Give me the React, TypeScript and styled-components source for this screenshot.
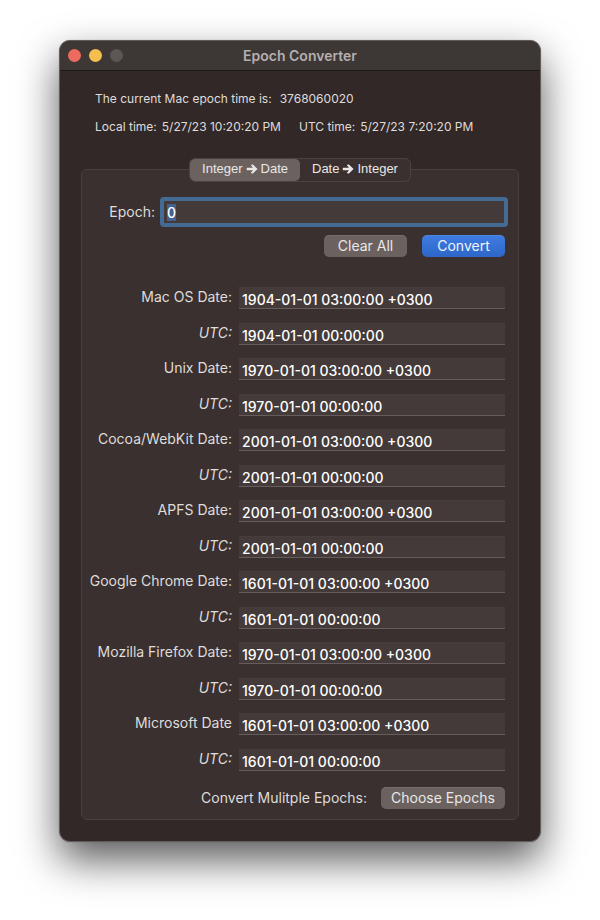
import React, { useEffect, useRef, useState } from "react";
import styled, { createGlobalStyle, css } from "styled-components";

const GlobalStyle = createGlobalStyle`
  *, *::before, *::after { box-sizing: border-box; }
  body {
    margin: 0;
    background: #fff;
    font-family: Inter, "Liberation Sans", sans-serif;
    font-size: 14px;
    color: #dfdcdb;
  }
  button, input { font: inherit; color: inherit; }
`;

const Desktop = styled.main`
  padding: 40px 59px 79px;
`;

const Window = styled.section`
  border: 1px solid #625b5a;
  border-radius: 11px;
  background: #322827;
  box-shadow: 0 0 1px rgba(0, 0, 0, 0.4), 0 18px 40px rgba(0, 0, 0, 0.65);
  overflow: hidden;
`;

const TitleBar = styled.header`
  display: grid;
  grid-template-columns: 1fr auto 1fr;
  align-items: center;
  height: 30px;
  padding: 0 8px;
  background: #3d3736;
  border-bottom: 1px solid #1f1918;
`;

const WindowControls = styled.div`
  display: flex;
  gap: 8px;
`;

const WindowControl = styled.button<{ $color: string }>`
  width: 13px;
  height: 13px;
  padding: 0;
  border: 0;
  border-radius: 50%;
  background: ${(p) => p.$color};
`;

const Title = styled.h1`
  margin: 0;
  font-size: 14px;
  line-height: 20px;
  font-weight: 600;
  color: #b4afae;
`;

const Summary = styled.div`
  display: grid;
  gap: 12px;
  padding: 20px 35px 34px;
  font-size: 12px;
  line-height: 16px;
`;

const SummaryRow = styled.div`
  display: flex;
  gap: 18px;
`;

const SummaryItem = styled.div<{ $wide?: boolean }>`
  display: flex;
  gap: ${(p) => (p.$wide ? 8 : 5)}px;
`;

const TabList = styled.div`
  display: flex;
  width: fit-content;
  height: 24px;
  margin: -12px auto 0;
  border: 1px solid #4b4342;
  border-radius: 6px;
  background: #3a302f;
`;

const Tab = styled.button`
  display: flex;
  align-items: center;
  gap: 3px;
  height: 22px;
  padding: 0 12px 2px;
  border: 0;
  border-radius: 5px;
  background: transparent;
  font-family: "Liberation Sans", Arial, sans-serif;
  font-size: 13px;
  line-height: 20px;
  color: #eae7e6;
  &[aria-selected="true"] {
    background: #6b6260;
  }
`;

const Panel = styled.div`
  margin: 0 21px 21px;
  border: 1px solid #483f3e;
  border-radius: 6px;
  background: #3a302f;
`;

const Form = styled.form`
  padding: 15px 13px 10px 7px;
`;

const EpochRow = styled.div`
  display: flex;
  align-items: center;
  justify-content: flex-end;
  gap: 5px;
  margin-right: -3px;
`;

const EpochLabel = styled.label`
  width: 66px;
  text-align: right;
  line-height: 20px;
`;

const EpochInput = styled.input`
  flex: 1;
  min-width: 0;
  height: 30px;
  padding: 0 3px;
  border: 4px solid #436b94;
  border-radius: 4px;
  background: #433a39;
  outline: 0;
  font-weight: 500;
  line-height: 18px;
  color: #fff;
  &::selection {
    background: #46618f;
    color: #fff;
  }
`;

const Actions = styled.div`
  display: flex;
  justify-content: flex-end;
  gap: 15px;
  margin: 8px 0 30px;
`;

const PushButton = styled.button<{ $primary?: boolean; $wide?: boolean }>`
  width: ${(p) => (p.$wide ? 124 : 83)}px;
  height: 22px;
  padding: 0 0 1px;
  border: 0;
  border-radius: 5px;
  line-height: 20px;
  box-shadow: inset 0 1px 0 rgba(255, 255, 255, 0.08);
  ${(p) =>
    p.$primary
      ? css`
          background: linear-gradient(#3f7ce2, #2d66c8);
          color: #f2f4fa;
        `
      : css`
          background: #6b6260;
          color: #eae7e6;
        `}
`;

const Results = styled.div`
  display: grid;
  gap: 13px;
`;

const ResultGroup = styled.div`
  display: grid;
  gap: 14px;
`;

const ResultRow = styled.div`
  display: flex;
  gap: 7px;
  height: 22px;
`;

const ResultLabel = styled.label<{ $italic?: boolean }>`
  width: 143px;
  text-align: right;
  line-height: 20px;
  white-space: nowrap;
  font-style: ${(p) => (p.$italic ? "italic" : "normal")};
`;

const ResultField = styled.input`
  flex: 1;
  min-width: 0;
  padding: 2px 3px 0;
  border: 1px solid #463d3c;
  border-bottom-color: #655c5b;
  border-width: 1px 0;
  border-radius: 0;
  background: #433a39;
  outline: 0;
  font-weight: 500;
  color: #fff;
`;

const Footer = styled.div`
  display: flex;
  align-items: center;
  justify-content: flex-end;
  gap: 14px;
  margin-top: 16px;
  line-height: 20px;
`;

const Arrow = () => (
  <svg width="12" height="12" viewBox="0 0 12 12" aria-hidden="true">
    <path
      d="M1 4.8H7L4.9 2.2Q5.6 1 6.9 1.6L11.6 6L6.9 10.4Q5.6 11 4.9 9.8L7 7.2H1Q0.2 6 1 4.8Z"
      fill="currentColor"
    />
  </svg>
);

const results = [
  { label: "Mac OS Date:", date: "1904-01-01" },
  { label: "Unix Date:", date: "1970-01-01" },
  { label: "Cocoa/WebKit Date:", date: "2001-01-01" },
  { label: "APFS Date:", date: "2001-01-01" },
  { label: "Google Chrome Date:", date: "1601-01-01" },
  { label: "Mozilla Firefox Date:", date: "1970-01-01" },
  { label: "Microsoft Date", date: "1601-01-01" },
];

export default function App() {
  const [epoch, setEpoch] = useState("0");
  const [tab, setTab] = useState(0);
  const epochRef = useRef<HTMLInputElement>(null);

  useEffect(() => {
    epochRef.current?.focus();
    epochRef.current?.select();
  }, []);

  return (
    <>
      <GlobalStyle />
      <Desktop>
        <Window aria-label="Epoch Converter">
          <TitleBar>
            <WindowControls>
              <WindowControl $color="#ed6a5e" aria-label="Close" />
              <WindowControl $color="#f5bf4f" aria-label="Minimize" />
              <WindowControl $color="#5d5655" aria-label="Zoom" disabled />
            </WindowControls>
            <Title>Epoch Converter</Title>
          </TitleBar>
          <Summary>
            <SummaryItem $wide>
              <span>The current Mac epoch time is:</span>
              <span>3768060020</span>
            </SummaryItem>
            <SummaryRow>
              <SummaryItem>
                <span>Local time:</span>
                <span>5/27/23 10:20:20 PM</span>
              </SummaryItem>
              <SummaryItem>
                <span>UTC time:</span>
                <span>5/27/23 7:20:20 PM</span>
              </SummaryItem>
            </SummaryRow>
          </Summary>
          <Panel>
            <TabList role="tablist">
              <Tab type="button" role="tab" aria-selected={tab === 0} onClick={() => setTab(0)}>
                Integer <Arrow /> Date
              </Tab>
              <Tab type="button" role="tab" aria-selected={tab === 1} onClick={() => setTab(1)}>
                Date <Arrow /> Integer
              </Tab>
            </TabList>
            <Form onSubmit={(e) => e.preventDefault()}>
              <EpochRow>
                <EpochLabel htmlFor="epoch">Epoch:</EpochLabel>
                <EpochInput
                  id="epoch"
                  ref={epochRef}
                  value={epoch}
                  onChange={(e) => setEpoch(e.target.value)}
                />
              </EpochRow>
              <Actions>
                <PushButton type="button" onClick={() => setEpoch("")}>
                  Clear All
                </PushButton>
                <PushButton type="submit" $primary>
                  Convert
                </PushButton>
              </Actions>
              <Results>
                {results.map((r, i) => (
                  <ResultGroup key={r.label}>
                    <ResultRow>
                      <ResultLabel htmlFor={`local-${i}`}>{r.label}</ResultLabel>
                      <ResultField id={`local-${i}`} readOnly value={`${r.date} 03:00:00 +0300`} />
                    </ResultRow>
                    <ResultRow>
                      <ResultLabel htmlFor={`utc-${i}`} $italic>
                        UTC:
                      </ResultLabel>
                      <ResultField id={`utc-${i}`} readOnly value={`${r.date} 00:00:00`} />
                    </ResultRow>
                  </ResultGroup>
                ))}
              </Results>
              <Footer>
                <span id="multiple-label">Convert Mulitple Epochs:</span>
                <PushButton type="button" $wide aria-describedby="multiple-label">
                  Choose Epochs
                </PushButton>
              </Footer>
            </Form>
          </Panel>
        </Window>
      </Desktop>
    </>
  );
}
